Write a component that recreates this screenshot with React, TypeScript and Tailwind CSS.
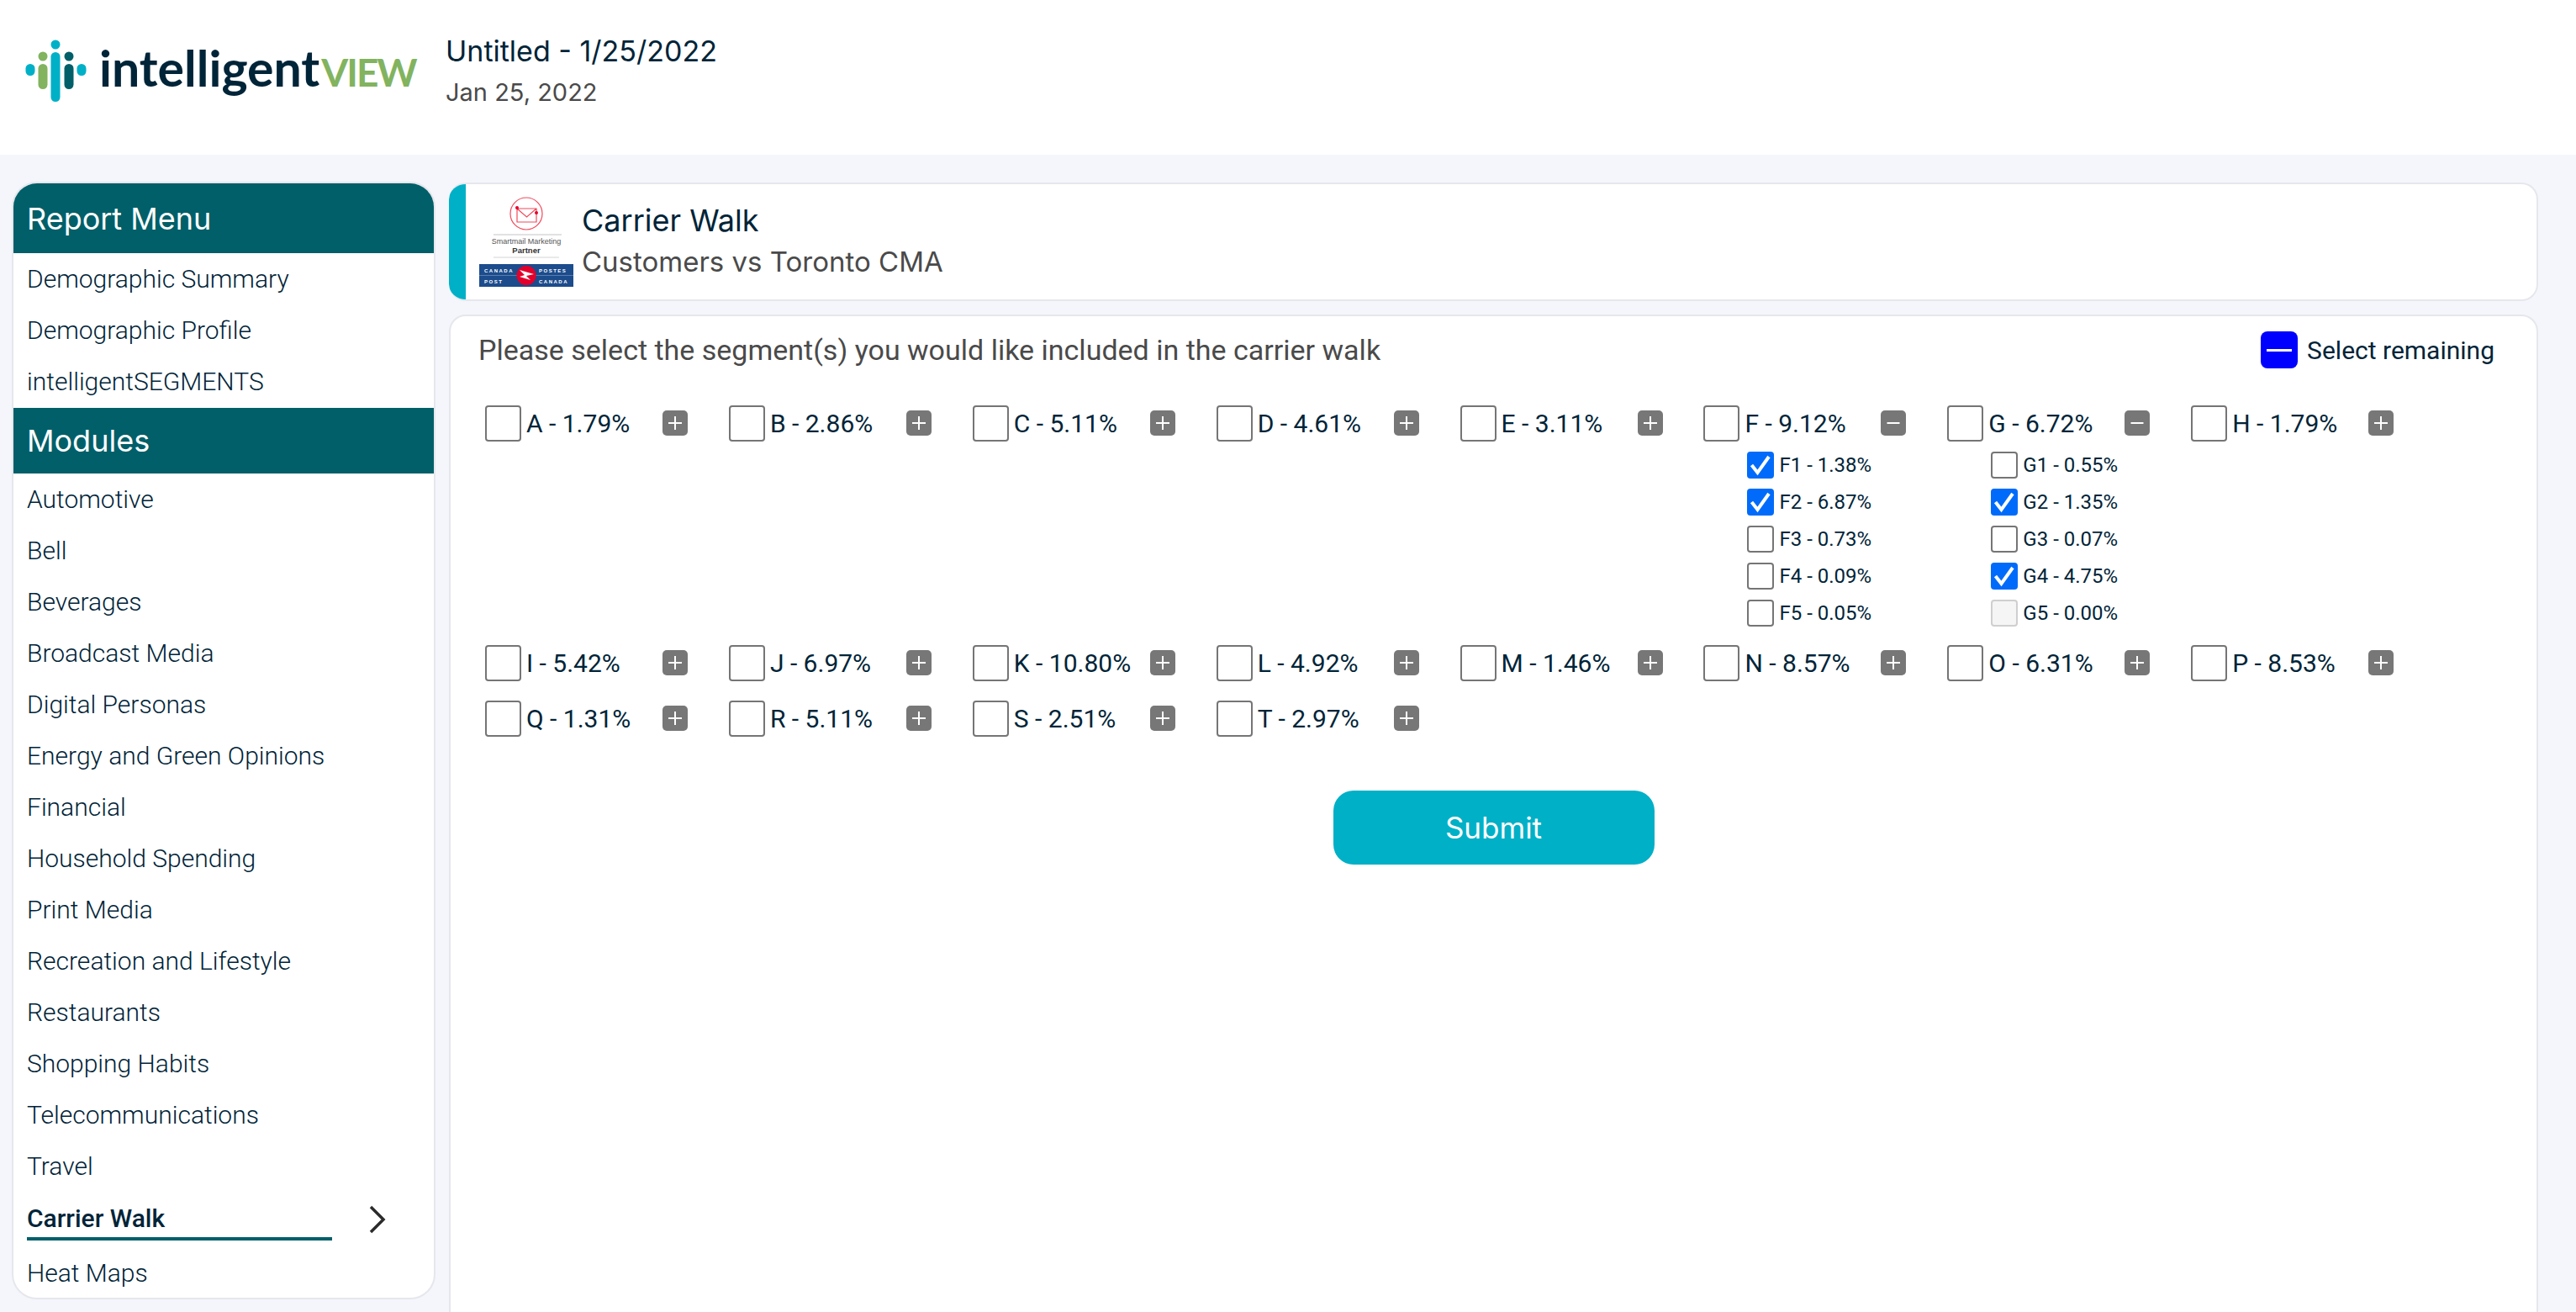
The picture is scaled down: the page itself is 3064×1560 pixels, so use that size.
import React from "react";

const reports = ["Demographic Summary", "Demographic Profile", "intelligentSEGMENTS"];
const modules = ["Automotive", "Bell", "Beverages", "Broadcast Media", "Digital Personas", "Energy and Green Opinions", "Financial", "Household Spending", "Print Media", "Recreation and Lifestyle", "Restaurants", "Shopping Habits", "Telecommunications", "Travel"];

type Sub = { label: string; checked?: boolean; disabled?: boolean };
type Seg = { label: string; subs?: Sub[] };

const segments: Seg[] = [
  { label: "A - 1.79%" }, { label: "B - 2.86%" }, { label: "C - 5.11%" }, { label: "D - 4.61%" }, { label: "E - 3.11%" },
  { label: "F - 9.12%", subs: [
    { label: "F1 - 1.38%", checked: true }, { label: "F2 - 6.87%", checked: true }, { label: "F3 - 0.73%" }, { label: "F4 - 0.09%" }, { label: "F5 - 0.05%" },
  ] },
  { label: "G - 6.72%", subs: [
    { label: "G1 - 0.55%" }, { label: "G2 - 1.35%", checked: true }, { label: "G3 - 0.07%" }, { label: "G4 - 4.75%", checked: true }, { label: "G5 - 0.00%", disabled: true },
  ] },
  { label: "H - 1.79%" }, { label: "I - 5.42%" }, { label: "J - 6.97%" }, { label: "K - 10.80%" }, { label: "L - 4.92%" }, { label: "M - 1.46%" }, { label: "N - 8.57%" }, { label: "O - 6.31%" }, { label: "P - 8.53%" },
  { label: "Q - 1.31%" }, { label: "R - 5.11%" }, { label: "S - 2.51%" }, { label: "T - 2.97%" },
];

function LogoMark() {
  return (
    <svg width="74" height="76" viewBox="0 0 74 76" className="shrink-0">
      <circle cx="36" cy="6" r="5.5" fill="#00b0c7" />
      <rect x="30.5" y="15" width="11" height="59" rx="5.5" fill="#00b0c7" />
      <circle cx="21" cy="20" r="5.5" fill="#82b35f" />
      <rect x="15.5" y="29" width="11" height="30" rx="5.5" fill="#82b35f" />
      <circle cx="52" cy="20" r="5.5" fill="#005f69" />
      <rect x="46.5" y="29" width="11" height="30" rx="5.5" fill="#005f69" />
      <rect x="0.5" y="29" width="11" height="14" rx="5.5" fill="#00b0c7" />
      <rect x="61.5" y="29" width="11" height="14" rx="5.5" fill="#00b0c7" />
    </svg>
  );
}

function PartnerLogo() {
  return (
    <svg width="112" height="108" viewBox="0 0 112 108" className="shrink-0">
      <circle cx="56" cy="20" r="19" fill="none" stroke="#f04a5c" strokeWidth="1.2" />
      <path d="M45 14h23v16H45zM45 14l11.5 10L68 14" fill="none" stroke="#f04a5c" strokeWidth="1.2" />
      <circle cx="45" cy="13" r="2" fill="#e3002b" />
      <circle cx="68" cy="19" r="2" fill="#e3002b" />
      <path d="M17 45h81" stroke="#c4c4c4" strokeWidth="1" />
      <text x="56" y="56" textAnchor="middle" fontFamily="Liberation Sans, sans-serif" fontSize="9" fill="#555">Smartmail Marketing</text>
      <text x="56" y="67" textAnchor="middle" fontFamily="Liberation Sans, sans-serif" fontSize="9.5" fontWeight="700" fill="#333">Partner</text>
      <path d="M17 72h78" stroke="#d4d4d4" strokeWidth="1" />
      <rect x="0" y="80" width="112" height="27" fill="#1c4c8c" />
      <path d="M0 93.5h112" stroke="#7f9dc4" strokeWidth="0.6" />
      <text x="6" y="90" fontFamily="Liberation Sans, sans-serif" fontSize="6" fontWeight="700" letterSpacing="1.5" fill="#fff">CANADA</text>
      <text x="71" y="90" fontFamily="Liberation Sans, sans-serif" fontSize="6" fontWeight="700" letterSpacing="1.5" fill="#fff">POSTES</text>
      <text x="6" y="103" fontFamily="Liberation Sans, sans-serif" fontSize="6" fontWeight="700" letterSpacing="1.5" fill="#fff">POST</text>
      <text x="71" y="103" fontFamily="Liberation Sans, sans-serif" fontSize="6" fontWeight="700" letterSpacing="1.5" fill="#fff">CANADA</text>
      <circle cx="56" cy="93.5" r="11.5" fill="#e3002b" />
      <path d="M48 87l17 5-9 2 5 5-13-4 6-2z" fill="#fff" />
    </svg>
  );
}

function PlusMinus({ open }: { open: boolean }) {
  return (
    <div className="w-[30px] h-[30px] rounded-[5px] bg-[#777777] flex items-center justify-center shrink-0">
      <svg width="20" height="20" viewBox="0 0 20 20">
        <path d={open ? "M2.5 10h15" : "M2 10h16M10 2v16"} stroke="#fff" strokeWidth="2" fill="none" />
      </svg>
    </div>
  );
}

function SubRow({ s }: { s: Sub }) {
  return (
    <div className="h-[44px] flex items-center">
      {s.checked ? (
        <div className="w-[32px] h-[32px] rounded-[4px] bg-[#006bfa] shrink-0">
          <svg width="32" height="32" viewBox="0 0 32 32">
            <path d="M5.5 16l7 9L26 6" stroke="#fff" strokeWidth="4" fill="none" />
          </svg>
        </div>
      ) : s.disabled ? (
        <div className="w-[32px] h-[32px] rounded-[4px] border-2 border-[#cfcfcf] bg-[#f5f5f5] shrink-0" />
      ) : (
        <div className="w-[32px] h-[32px] rounded-[4px] border-2 border-[#757575] bg-white shrink-0" />
      )}
      <span className="ml-[6px] text-[24px] text-[#002438]">{s.label}</span>
    </div>
  );
}

function Segment({ seg }: { seg: Seg }) {
  return (
    <div>
      <div className="h-[66px] w-[241px] flex items-center">
        <div className="w-[43px] h-[43px] rounded-[4px] border-2 border-[#757575] bg-white shrink-0" />
        <span className="ml-[6px] flex-1 text-[30px] text-[#002438]">{seg.label}</span>
        <PlusMinus open={!!seg.subs} />
      </div>
      {seg.subs && (
        <div className="-mt-[5px] pb-[4px] pl-[52px]">
          {seg.subs.map((s) => <SubRow key={s.label} s={s} />)}
        </div>
      )}
    </div>
  );
}

export default function App() {
  return (
    <div className="h-[1560px] overflow-hidden bg-[#f4f6fb] font-['Roboto',sans-serif]">
      <header className="h-[184px] bg-white flex items-start">
        <div className="w-[466px] ml-[30px] mt-[47px] flex items-start">
          <LogoMark />
          <div className="ml-[14px] mt-[4px] flex items-baseline leading-none font-['Lato',sans-serif]">
            <span className="text-[59px] font-bold text-[#002438]">intelligent</span>
            <span className="ml-[2px] text-[46px] font-bold tracking-[-2px] text-[#82b35f]">VIEW</span>
          </div>
        </div>
        <div className="ml-[34px] mt-[38px] font-['Inter',sans-serif]">
          <div className="text-[34px] leading-[46px] text-[#002438]">Untitled - 1/25/2022</div>
          <div className="mt-[7px] text-[29px] leading-[38px] text-[#4a4a4a]">Jan 25, 2022</div>
        </div>
      </header>

      <div className="flex items-start pl-[14px] pt-[32px] gap-[16px]">
        <aside className="w-[504px] h-[1329px] rounded-[30px] border-2 border-[#e6e7ec] bg-white overflow-hidden shrink-0">
          <div className="h-[83px] flex items-center px-[16px] bg-[#005f69] text-white font-['Inter',sans-serif] text-[36px]">Report Menu</div>
          <ul>
            {reports.map((r) => (
              <li key={r} className="h-[61px] flex items-center px-[16px] text-[30px] font-light text-[#002438]">{r}</li>
            ))}
          </ul>
          <div className="h-[78px] mt-[1px] flex items-center px-[16px] bg-[#005f69] text-white font-['Inter',sans-serif] text-[36px]">Modules</div>
          <ul>
            {modules.map((r) => (
              <li key={r} className="h-[61px] flex items-center px-[16px] text-[30px] font-light text-[#002438]">{r}</li>
            ))}
            <li className="h-[61px] flex items-start pl-[16px]">
              <div className="w-[363px] h-[58px] pt-[8px] border-b-4 border-[#005f69] flex items-center text-[30px] font-medium text-[#002438]">Carrier Walk</div>
              <svg width="20" height="34" viewBox="0 0 20 34" className="ml-[44px] mt-[16px]">
                <path d="M2 2l15 15L2 32" stroke="#2b2b2b" strokeWidth="3.5" fill="none" />
              </svg>
            </li>
            <li className="h-[70px] flex items-center px-[16px] text-[30px] font-light text-[#002438]">Heat Maps</li>
          </ul>
        </aside>

        <main className="w-[2485px] mt-[1px] shrink-0">
          <div className="h-[141px] rounded-[20px] border-2 border-[#e6e7ec] border-l-0 bg-white overflow-hidden flex items-center">
            <div className="w-[20px] self-stretch bg-[#00b0c7] rounded-l-[20px] -my-[2px]" />
            <div className="ml-[16px]"><PartnerLogo /></div>
            <div className="ml-[10px] -mt-[2px]">
              <div className="font-['Inter',sans-serif] text-[36px] leading-[48px] text-[#002438]">Carrier Walk</div>
              <div className="mt-[1px] font-['Inter',sans-serif] text-[33px] leading-[48px] text-[#4a4a4a]">Customers vs Toronto CMA</div>
            </div>
          </div>

          <div className="mt-[16px] h-[1300px] rounded-[20px] border-2 border-[#e6e7ec] bg-white">
            <div className="h-[80px] mb-[14px] pl-[33px] pr-[50px] flex items-center justify-between">
              <div className="text-[34px] text-[#4a4a4a]">Please select the segment(s) you would like included in the carrier walk</div>
              <div className="flex items-center">
                <div className="w-[44px] h-[44px] rounded-[8px] bg-[#0000ff] flex items-center justify-center">
                  <div className="w-[30px] h-[3px] bg-white" />
                </div>
                <span className="ml-[11px] text-[30px] text-[#002438]">Select remaining</span>
              </div>
            </div>
            <div className="ml-[41px] grid grid-cols-[repeat(8,289.9px)] items-start">
              {segments.map((s) => <Segment key={s.label} seg={s} />)}
            </div>
            <div className="mt-[53px] flex justify-center">
              <button className="w-[382px] h-[88px] rounded-[24px] bg-[#00b0c7] text-white font-['Inter',sans-serif] text-[35px]">Submit</button>
            </div>
          </div>
        </main>
      </div>
    </div>
  );
}
